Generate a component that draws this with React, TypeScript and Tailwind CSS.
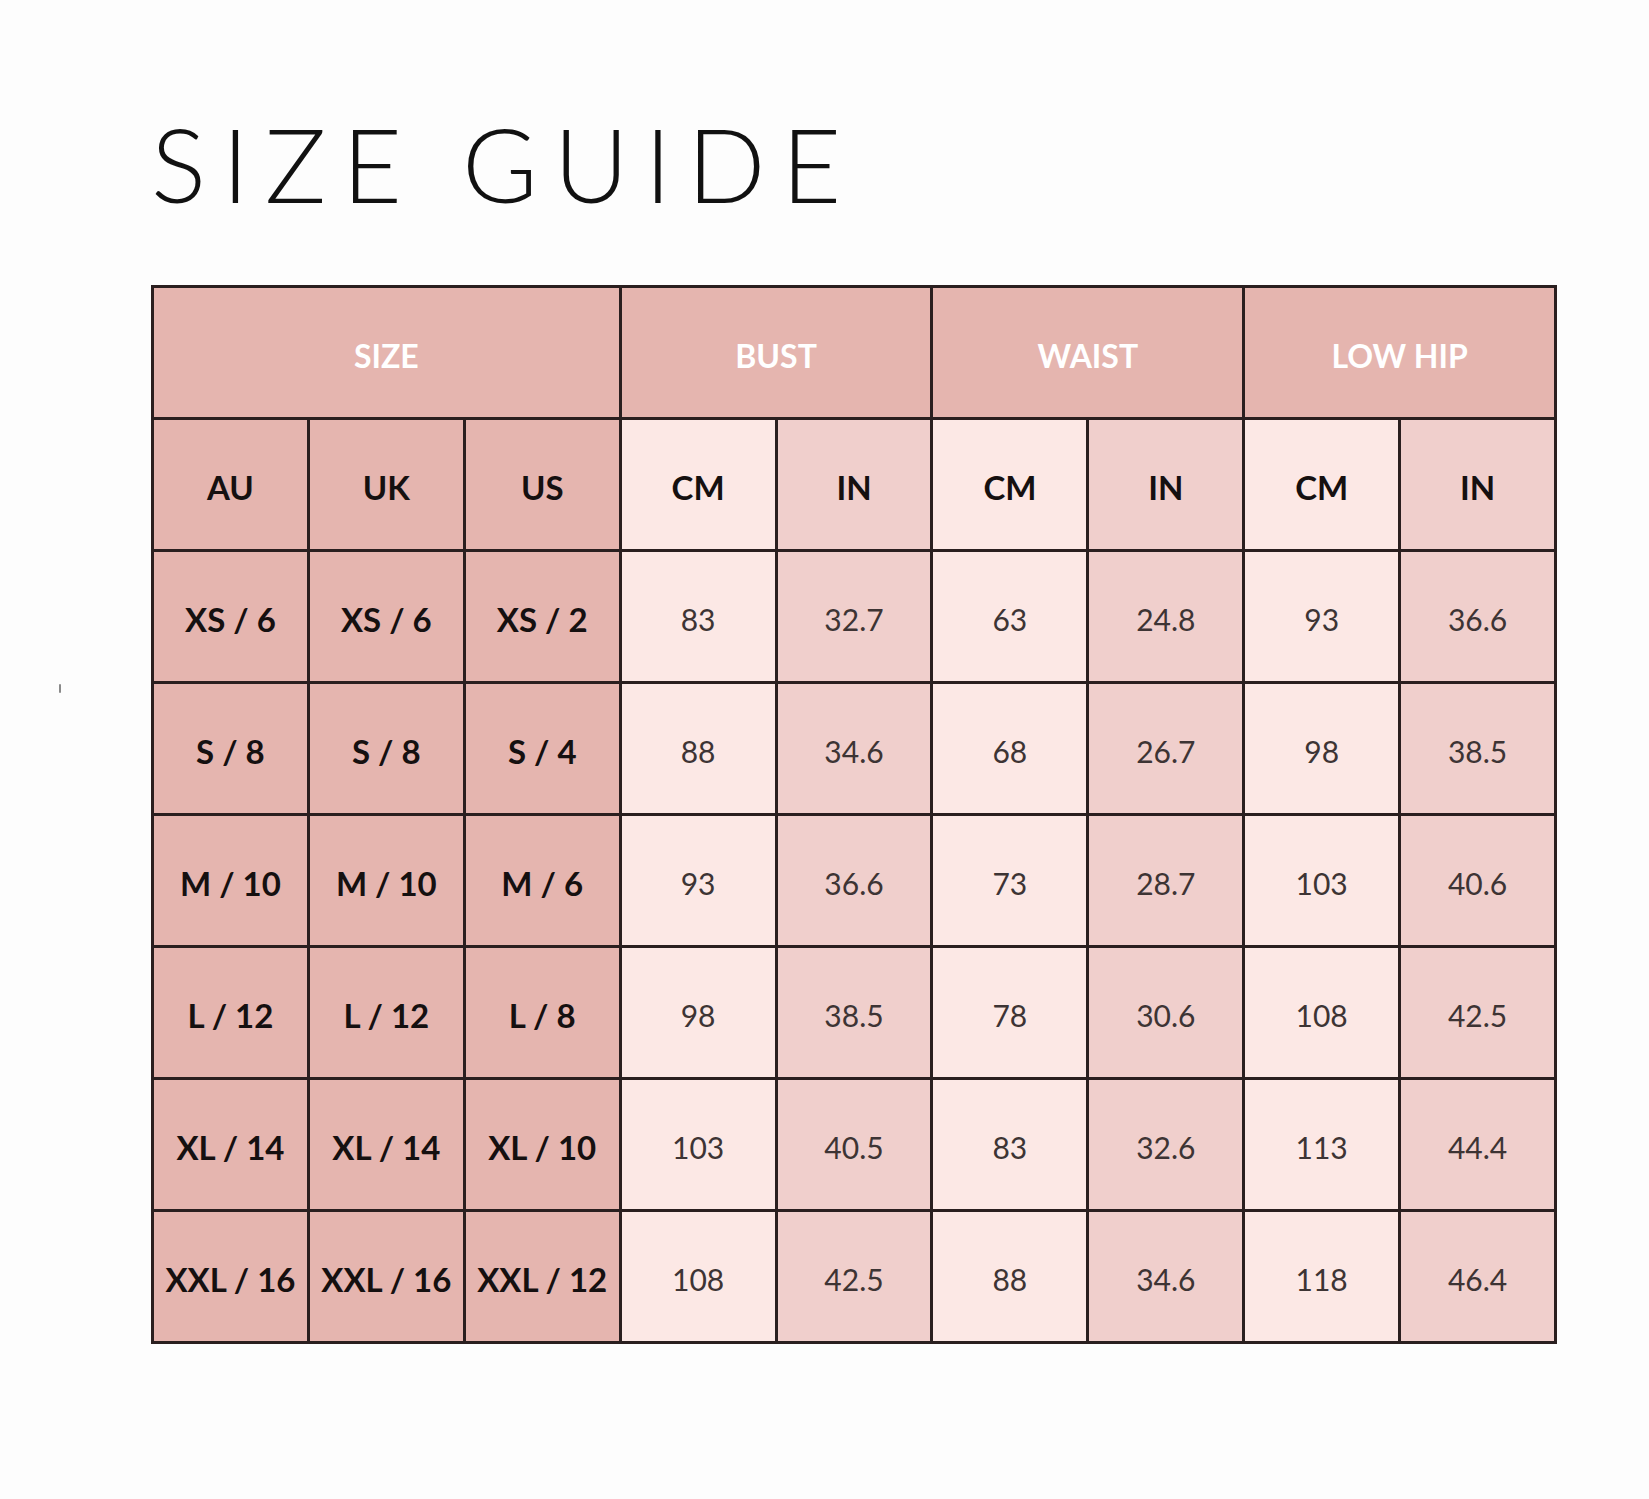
const HEAD = [
  { label: 'SIZE', span: 'col-span-3' },
  { label: 'BUST', span: 'col-span-2' },
  { label: 'WAIST', span: 'col-span-2' },
  { label: 'LOW HIP', span: 'col-span-2' },
]

const SUB = ['AU', 'UK', 'US', 'CM', 'IN', 'CM', 'IN', 'CM', 'IN']

const ROWS = [
  ['XS / 6', 'XS / 6', 'XS / 2', '83', '32.7', '63', '24.8', '93', '36.6'],
  ['S / 8', 'S / 8', 'S / 4', '88', '34.6', '68', '26.7', '98', '38.5'],
  ['M / 10', 'M / 10', 'M / 6', '93', '36.6', '73', '28.7', '103', '40.6'],
  ['L / 12', 'L / 12', 'L / 8', '98', '38.5', '78', '30.6', '108', '42.5'],
  ['XL / 14', 'XL / 14', 'XL / 10', '103', '40.5', '83', '32.6', '113', '44.4'],
  ['XXL / 16', 'XXL / 16', 'XXL / 12', '108', '42.5', '88', '34.6', '118', '46.4'],
]

// column background: size cols rose, cm light, in mid
function colBg(i: number) {
  if (i < 3) return 'bg-[#e5b5af]'
  return i % 2 === 1 ? 'bg-[#fce8e5]' : 'bg-[#f0cfcc]'
}

export default function App() {
  return (
    <div className="relative min-h-[1499px] bg-[#fdfdfd] font-['Lato',sans-serif]">
      <span className="absolute left-[59px] top-[684px] h-[9px] w-[2px] rounded-full bg-[#8a8a8a]" />
      <div className="pl-[151px] pt-[103px]">
        <h1 className="text-[103px] font-light leading-[120px] tracking-[0.155em] text-[#111]">
          SIZE GUIDE
        </h1>

        <div className="mt-[62px] grid w-[1406px] grid-cols-9 gap-[3px] bg-[#2a1f1f] p-[3px]">
          {HEAD.map(h => (
            <div
              key={h.label}
              className={`${h.span} flex h-[129px] items-center justify-center bg-[#e5b5af] pt-[6px] text-[32px] font-bold text-white`}
            >
              {h.label}
            </div>
          ))}
          {SUB.map((s, i) => (
            <div
              key={i}
              className={`${colBg(i)} flex h-[129px] items-center justify-center pt-[6px] text-[33px] font-bold text-[#151010]`}
            >
              {s}
            </div>
          ))}
          {ROWS.map((row, r) =>
            row.map((v, i) => (
              <div
                key={`${r}-${i}`}
                className={`${colBg(i)} flex h-[129px] items-center justify-center whitespace-nowrap pt-[6px] ${
                  i < 3 ? 'text-[33px] font-bold text-[#151010]' : 'text-[30px] font-normal text-[#3d3434]'
                }`}
              >
                {v}
              </div>
            ))
          )}
        </div>
      </div>
    </div>
  )
}
